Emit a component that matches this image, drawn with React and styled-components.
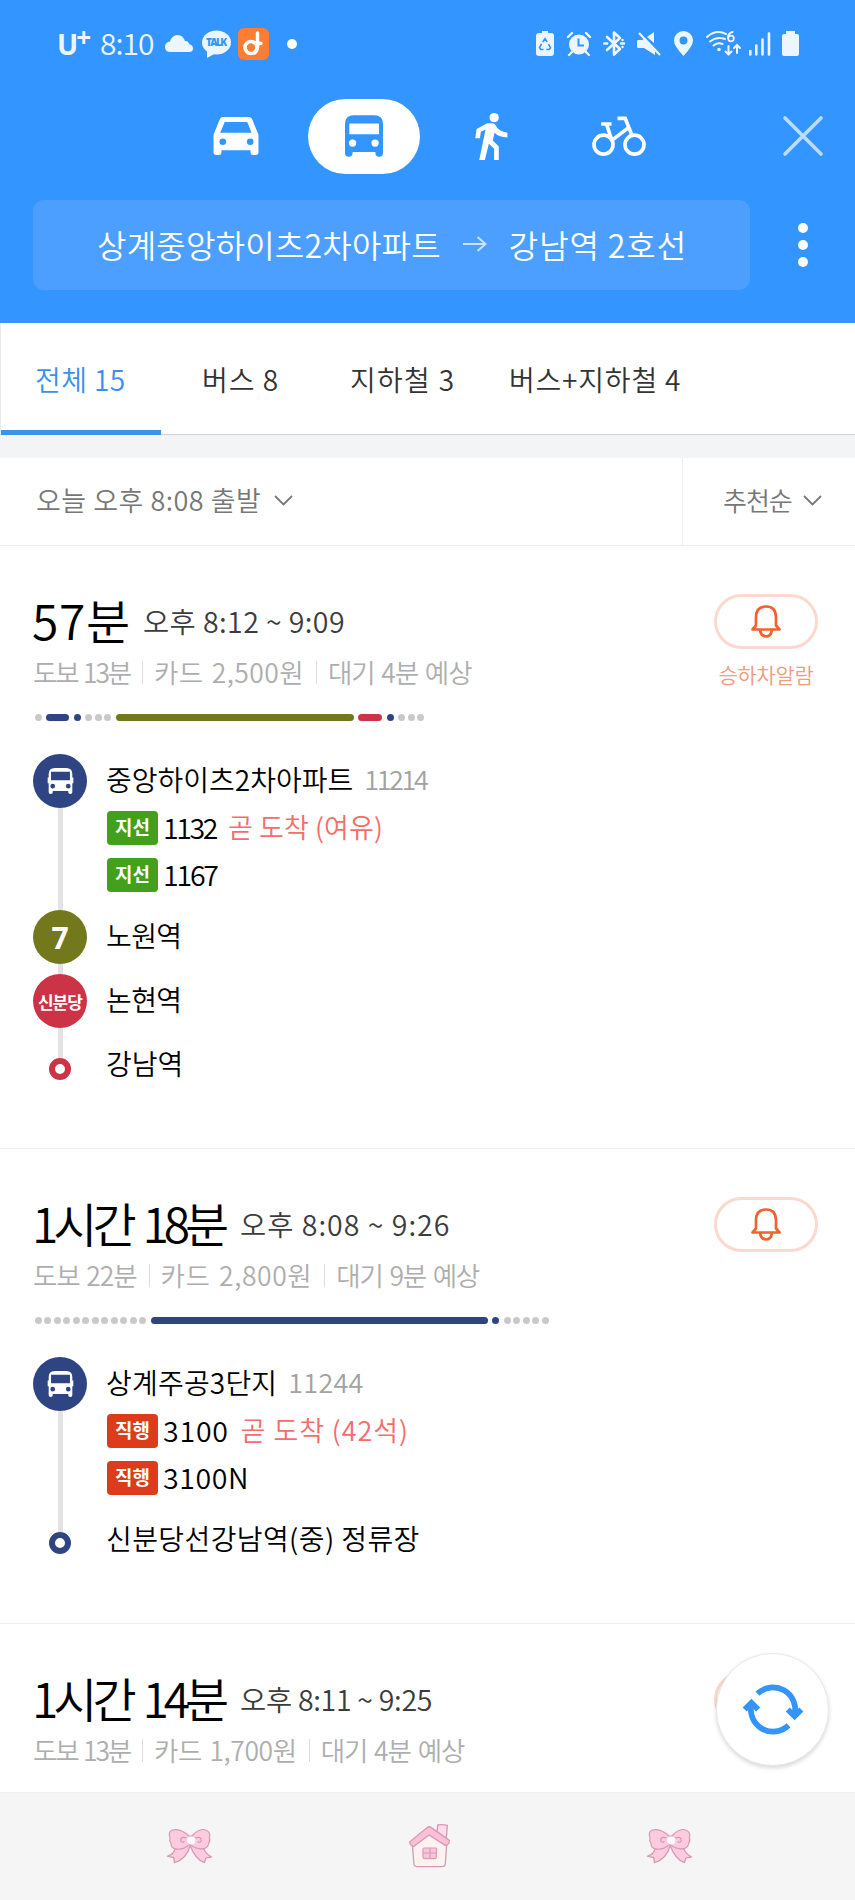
import React from "react";
import styled, { createGlobalStyle } from "styled-components";

const GlobalStyle = createGlobalStyle`
  * {
    box-sizing: border-box;
  }

  body {
    margin: 0;
    background: #fff;
    font-family: "Noto Sans CJK KR", "Noto Sans", sans-serif;
    font-weight: 350;
  }
`;

const Screen = styled.div`
  position: relative;
  width: 855px;
  height: 1900px;
  display: flex;
  flex-direction: column;
  overflow: hidden;
  background: #fff;
`;

const Text = styled.span`
  flex: none;
  margin-left: ${(p) => p.$ml || 0}px;
  font-size: ${(p) => p.$size}px;
  line-height: ${(p) => p.$line || 36}px;
  letter-spacing: ${(p) => p.$ls || 0}px;
  color: ${(p) => p.$color || "#000"};
  white-space: nowrap;
`;

const Header = styled.header`
  flex: none;
  height: 323px;
  background: #3395ff;
  color: #fff;
`;

const StatusBar = styled.div`
  height: 87px;
  padding: 0 56px 0 57px;
  display: flex;
  align-items: center;
  justify-content: space-between;
`;

const StatusLeft = styled.div`
  display: flex;
  align-items: center;
`;

const Carrier = styled.span`
  display: flex;
  width: 43px;
  font: 700 28px/28px "Open Sans", sans-serif;
  color: #edf6ff;

  sup {
    font-size: 26px;
    line-height: 14px;
    margin-left: -2px;
  }
`;

const Clock = styled(Text)`
  padding-bottom: 3px;
`;

const StatusIcons = styled.div`
  display: flex;
  align-items: center;
`;

const Glyph = styled.svg`
  flex: none;
  display: block;
  overflow: visible;
  margin-left: ${(p) => p.$ml || 0}px;
`;

const Dot = styled.i`
  width: 10px;
  height: 10px;
  border-radius: 50%;
  background: #fff;
  margin-left: ${(p) => p.$ml || 0}px;
`;

const ModeBar = styled.nav`
  height: 98px;
  padding: 0 32px 0 213px;
  display: flex;
  align-items: center;
`;

const ActiveMode = styled.div`
  width: 112px;
  height: 75px;
  margin: 0 55px 0 49px;
  border-radius: 38px;
  background: #fff;
  display: flex;
  align-items: center;
  justify-content: center;
`;

const SearchRow = styled.div`
  display: flex;
  align-items: center;
  padding: 15px 47px 0 33px;
  justify-content: space-between;
`;

const SearchBox = styled.div`
  width: 717px;
  height: 90px;
  padding: 0 0 2px 64px;
  border-radius: 11px;
  background: #4d9fff;
  display: flex;
  align-items: center;
`;

const Kebab = styled.div`
  display: flex;
  flex-direction: column;
  gap: 7px;
`;

const Tabs = styled.div`
  flex: none;
  height: 112px;
  display: flex;
  border-left: 1px solid #e8ecef;
  border-bottom: 1px solid #cdd3d8;
`;

const Tab = styled.div`
  height: 112px;
  padding: 38px 0 0 ${(p) => p.$pad}px;
  width: ${(p) => p.$width}px;
  border-bottom: 5px solid ${(p) => (p.$active ? "#3e92ea" : "transparent")};
`;

const Spacer = styled.div`
  flex: none;
  height: 23px;
  background: #f3f4f6;
`;

const Filters = styled.div`
  flex: none;
  height: 88px;
  display: flex;
  border-bottom: 1px solid #ebebeb;
`;

const Filter = styled.div`
  display: flex;
  align-items: center;
  padding: 0 0 3px ${(p) => p.$pad}px;
  flex: ${(p) => (p.$grow ? 1 : "none")};
  width: ${(p) => p.$width || "auto"};
  border-left: ${(p) => (p.$grow ? "none" : "1px solid #eee")};
`;

const Card = styled.section`
  flex: none;
  height: ${(p) => p.$height}px;
  padding: 44px 37px 0 33px;
  display: flex;
  justify-content: space-between;
  align-items: flex-start;
  border-bottom: 1px solid #f0f0f0;
`;

const Headline = styled.div`
  display: flex;
  align-items: center;
  height: 62px;
  margin-left: -1px;
`;

const Duration = styled(Text)`
  width: ${(p) => p.$width}px;
  padding-bottom: 4px;
  word-spacing: 5px;
`;

const Meta = styled.div`
  display: flex;
  align-items: center;
  height: 40px;
  word-spacing: 2px;

  span + span {
    margin-left: 12px;
    padding-left: 12px;
    background: linear-gradient(#dcdcdc, #dcdcdc) left center / 1px 23px no-repeat;
  }
`;

const Progress = styled.div`
  display: flex;
  gap: 4.5px;
  padding-left: 1.5px;
  margin-top: 22px;
`;

const Walk = styled.div`
  display: flex;
  gap: 2.5px;
`;

const Piece = styled.i`
  width: ${(p) => p.$width || 7}px;
  height: 7px;
  border-radius: 4px;
  background: ${(p) => p.$color || "#c9c9c9"};
`;

const Steps = styled.div`
  margin-top: 33px;
`;

const Step = styled.div`
  display: flex;
  height: ${(p) => p.$height}px;
`;

const Rail = styled.div`
  width: 54px;
  margin-right: 19px;
  display: flex;
  flex-direction: column;
  align-items: center;

  &::after {
    content: "";
    flex: 1;
    width: 5px;
    background: ${(p) => (p.$last ? "transparent" : "#e3e3e3")};
  }
`;

const Marker = styled.div`
  flex: none;
  width: 54px;
  height: 54px;
  border-radius: 50%;
  background: ${(p) => p.$color};
  color: #fff;
  display: flex;
  align-items: center;
  justify-content: center;
  font: ${(p) => (p.$small ? '700 17px "Noto Sans CJK KR"' : '700 30px "Open Sans"')}, sans-serif;
  letter-spacing: ${(p) => (p.$small ? -0.9 : 0)}px;
`;

const Ring = styled.div`
  flex: none;
  width: 22px;
  height: 22px;
  border-radius: 50%;
  border: 6.5px solid ${(p) => p.$color};
`;

const StepBody = styled.div`
  margin-top: ${(p) => p.$top}px;
`;

const StopName = styled.div`
  display: flex;
  align-items: center;
  gap: 11px;
  height: 36px;
`;

const BusLine = styled.div`
  display: flex;
  align-items: center;
  height: 34px;
  margin-top: 14px;

  & + & {
    margin-top: 13px;
  }
`;

const Badge = styled.span`
  width: 51px;
  height: 34px;
  margin: 0 5px 0 1px;
  border-radius: 4px;
  background: ${(p) => p.$color};
  color: #fff;
  font-size: 19px;
  line-height: 32px;
  font-weight: 700;
  text-align: center;
`;

const BusText = styled(Text)`
  padding-bottom: 2px;
`;

const Alarm = styled.div`
  width: 104px;
  margin-top: 4px;
  display: flex;
  flex-direction: column;
  align-items: center;
  gap: 9px;
`;

const AlarmButton = styled.button`
  width: 104px;
  height: 55px;
  padding: 0;
  border: 3px solid #fbd9ce;
  border-radius: 28px;
  background: #fff;
  display: flex;
  align-items: center;
  justify-content: center;
`;

// floats over the bottom of the list
const Refresh = styled.button`
  position: absolute;
  right: 26px;
  bottom: 134px;
  width: 113px;
  height: 113px;
  padding: 0;
  border: 1px solid #e9e9e9;
  border-radius: 50%;
  background: #fff;
  box-shadow: 0 2px 4px rgba(0, 0, 0, 0.16);
  display: flex;
  align-items: center;
  justify-content: center;
`;

const BottomBar = styled.footer`
  flex: none;
  height: 107px;
  margin-top: auto;
  padding: 31px 163px 0 167px;
  background: #f5f5f5;
  display: flex;
  justify-content: space-between;
`;

const NAVY = "#2f4482";
const OLIVE = "#72781b";
const RED = "#cd3347";

const Icon = ({ w, h, box, ml, children }) => (
  <Glyph width={w} height={h} viewBox={box || `0 0 ${w} ${h}`} $ml={ml} fill="none">
    {children}
  </Glyph>
);

const StatusRight = () => (
  <StatusIcons>
    <Icon w={18} h={25}>
      <path d="M6 0h6v2h3q3 0 3 3v17q0 3-3 3H3q-3 0-3-3V5q0-3 3-3h3z" fill="#edf6ff" />
      <path
        d="M6.8 11 9 7.6l2.2 3.4M12.5 13l2 3.8-1.4 1.7h-2.8M7.5 18.5H4.7l-1.2-1.8 2-3.7"
        stroke="#3395ff"
        strokeWidth="1.6"
      />
    </Icon>
    <Icon w={24} h={24} ml={13}>
      <circle cx="12" cy="12.5" r="10" fill="#edf6ff" />
      <path d="M1 5l4-4M23 5l-4-4M5 20l-3 3M19 20l3 3" stroke="#edf6ff" strokeWidth="2.4" strokeLinecap="round" />
      <path d="M11.5 6.5v7H17" stroke="#3395ff" strokeWidth="2" />
    </Icon>
    <Icon w={22} h={25} ml={12}>
      <path d="M4 6l13 12-6 5.5V1.5L17 7 4 19" stroke="#edf6ff" strokeWidth="2.6" strokeLinejoin="round" strokeLinecap="round" />
      <path d="M1.2 12.5h3M18 12.5h3M19.5 9v.1M19.5 16v.1" stroke="#edf6ff" strokeWidth="2.4" strokeLinecap="round" />
    </Icon>
    <Icon w={24} h={24} ml={12}>
      <path d="M0 9q0-1 1-1h4l2-1 11 12v4L7 16H1q-1 0-1-1zM10 5l7-5v11z" fill="#edf6ff" />
      <path d="M2 1l21 22" stroke="#edf6ff" strokeWidth="2.2" />
    </Icon>
    <Icon w={19} h={25} ml={13}>
      <path d="M9.5 0a9.5 9.5 0 0 1 9.500 9.500Q19 15 9.500 25 0 15 0 9.500A9.500 9.500 0 0 1 9.500 0zm0 5.500a4 4 0 1 0 0 8 4 4 0 0 0 0-8z" fill="#edf6ff" />
    </Icon>
    <Icon w={35} h={25} ml={13}>
      <path
        d="M1 6Q10-2 20 3M4 10.5Q11 5 19 8M7.5 14.5Q12 11 16.5 13M22.5 15v8.5m-3-3l3 3 3-3M31 22v-8m-3 3l3-3 3 3M26.5 1Q22 2 22 7"
        stroke="#edf6ff"
        strokeWidth="2"
        strokeLinecap="round"
      />
      <circle cx="25" cy="7.5" r="2.8" stroke="#edf6ff" strokeWidth="1.8" />
      <circle cx="13" cy="18.5" r="1.8" fill="#edf6ff" />
    </Icon>
    <Icon w={22} h={24} ml={8}>
      <path d="M1.3 19v3.5M7.3 13.5v9M13.5 7.5v15M20 1.5v21" stroke="#edf6ff" strokeWidth="2.6" strokeLinecap="round" />
    </Icon>
    <Icon w={17} h={25} ml={11}>
      <path d="M4 0h9v3h2q2 0 2 2v18q0 2-2 2H2q-2 0-2-2V5q0-2 2-2h2z" fill="#edf6ff" />
    </Icon>
  </StatusIcons>
);

const StatusApps = () => (
  <>
    <Icon w={28} h={17} ml={12}>
      <path d="M5.5 17Q0 17 0 12q0-5 5-5.5Q7 0 12.5 0 18 0 20 6q3-.5 4.3 3.2Q28 10 28 13.5 28 17 24 17z" fill="#edf6ff" />
    </Icon>
    <Icon w={29} h={28} ml={9}>
      <ellipse cx="14.5" cy="12.5" rx="14.5" ry="12" fill="#edf6ff" />
      <path d="M5 20v8l9-5z" fill="#edf6ff" />
      <text x="14.5" y="16" textAnchor="middle" textLength="21" fontFamily="Open Sans" fontSize="10" fontWeight="800" fill="#3395ff">
        TALK
      </text>
    </Icon>
    <Icon w={31} h={32} ml={7}>
      <rect width="31" height="32" rx="6" fill="#ff7d33" />
      <circle cx="13" cy="19.5" r="6" stroke="#fff" strokeWidth="3.6" />
      <path d="M19.5 5v14q0 4-3 6M16 14.500l7 1" stroke="#fff" strokeWidth="3.4" strokeLinecap="round" />
    </Icon>
  </>
);

const CarIcon = () => (
  <Icon w={46} h={38} box="0 0 136 115">
    <path
      fill="#fff"
      fillRule="evenodd"
      d="M30 0H106Q115 0 118 9L136 54V107Q136 115 128 115H120Q113 115 112 108V101H24V108Q23 115 16 115H8Q0 115 0 107V54L18 9Q21 0 30 0ZM34 15 20 48H115L102 15ZM28 65a10 10 0 1 0 0 20 10 10 0 0 0 0-20ZM111 65a10 10 0 1 0 0 20 10 10 0 0 0 0-20Z"
    />
  </Icon>
);

const BusIcon = () => (
  <Icon w={38} h={42} box="0 0 115 125">
    <path
      fill="#3395ff"
      fillRule="evenodd"
      d="M0 26Q0 0 26 0H89Q115 0 115 26V114Q115 125 103 125 92 125 92 114V111H23V114Q23 125 11 125 0 125 0 114ZM13 25V57H103V25ZM23 73a11 11 0 1 0 0 22 11 11 0 0 0 0-22ZM91 73a11 11 0 1 0 0 22 11 11 0 0 0 0-22Z"
    />
  </Icon>
);

const SmallBus = () => (
  <Icon w={25} h={26} box="0 0 74 77">
    <path
      fill="#fff"
      fillRule="evenodd"
      d="M2 18Q2 0 20 0H54Q72 0 72 18V28H75V45H72V72Q72 77 66 77 60 77 60 72V68H14V72Q14 77 8 77 2 77 2 72V45H-1V28H2ZM9 11V36H65V11ZM14 47a7 7 0 1 0 0 14 7 7 0 0 0 0-14ZM60 47a7 7 0 1 0 0 14 7 7 0 0 0 0-14Z"
    />
  </Icon>
);

const WalkIcon = () => (
  <Icon w={33} h={47} box="0 0 98 142">
    <circle cx="57" cy="14" r="14" fill="#fff" />
    <path
      fill="#fff"
      d="M4 48 36 31H50Q58 31 62 38 70 56 97 60V74Q72 74 58 60L53 83 71 101V142H57V108L41 93 29 142H12L31 50 17 57 14 76H0Z"
    />
  </Icon>
);

const BikeIcon = () => (
  <Icon w={54} h={40} box="0 0 161 120" ml={84}>
    <g stroke="#fff" strokeWidth="11">
      <circle cx="34" cy="86" r="28.5" />
      <circle cx="127" cy="86" r="28.5" />
      <path d="M27 24H58M43 24 54 58 62 78M58 74 110 34M76 7H99L121 62" />
    </g>
  </Icon>
);

const Chevron = ({ ml }) => (
  <Icon w={19} h={11} ml={ml}>
    <path d="M1.5 1.5 9.5 9.5 17.5 1.5" stroke="#777" strokeWidth="1.8" strokeLinecap="round" />
  </Icon>
);

const Bell = () => (
  <Icon w={30} h={33}>
    <path d="M5 20.5V12.5Q5 1.5 15 1.5T25 12.5V20.5L28.5 24.5H1.5ZM9 25Q10 31.5 15 31.5T21 25" stroke="#f2622e" strokeWidth="2.7" strokeLinejoin="round" />
  </Icon>
);

const RefreshIcon = () => (
  <Icon w={60} h={53} box="0 0 178 156">
    <g stroke="#3395f9" strokeWidth="17">
      <path d="M43 31A66 66 0 0 1 153 94M133 78 153 98 173 78" />
      <path d="M135 125A66 66 0 0 1 25 62M45 78 25 58 5 78" />
    </g>
  </Icon>
);

const Bow = () => (
  <Icon w={45} h={43} box="0 -14 134 128">
    <g fill="#fccbdd" stroke="#d796b2" strokeWidth="3.5" strokeLinejoin="round">
      <path d="M66 46Q40 58 24 60 20 76 1 82L20 86 22 101Q58 92 69 50 84 92 112 101L115 88 133 84Q114 74 110 60 90 58 72 46" />
      <path d="M66 22Q40-3 16 4 2 10 9 27 6 36 12 44 12 60 30 61 52 62 68 46 86 62 106 60 122 58 124 44 130 34 126 27 132 8 112 3 94-1 74 22Z" />
      <path d="M58 27Q40 22 41 35 44 44 52 38M84 27Q102 22 102 35 99 44 91 38" fill="none" />
    </g>
    <circle cx="72" cy="35" r="12" fill="#fff" />
  </Icon>
);

const House = () => (
  <Icon w={41} h={44} box="0 0 123 132">
    <g stroke="#d99ab5" strokeWidth="4" strokeLinejoin="round">
      <path d="M84 28 86 3Q100 0 115 4L112 42Z" fill="#fbdde8" />
      <path d="M10 62 15 122Q17 128 30 128H98Q108 128 109 120L113 60 60 20Z" fill="#fcf3f0" />
      <path d="M2 54 53 12Q60 5 67 11L121 49Q122 60 110 65L60 33 15 67Q3 66 2 54Z" fill="#fcc0d6" />
      <path d="M46 72H80Q84 72 83 77L82 99Q82 104 77 104H48Q42 104 42 99V76Q42 72 46 72ZM63 72V104M42 87H83" fill="#f8c4d9" strokeWidth="3.5" />
    </g>
  </Icon>
);

const routes = [
  {
    height: 603,
    duration: ["57분", 0.6, 111],
    time: ["오후 8:12 ~ 9:09", 0.4],
    meta: [["도보 13분", -2.2], ["카드 2,500원", 0.4], ["대기 4분 예상", -1.1]],
    alarmLabel: "승하차알람",
    pieces: [1, [23, NAVY], [7, NAVY], 3, [238, OLIVE], [24, RED], [7, NAVY], 3],
    steps: [
      {
        height: 156,
        marker: "bus",
        color: NAVY,
        name: ["중앙하이츠2차아파트", 0],
        stop: ["11214", -2.4],
        top: 7,
        buses: [
          { kind: "지선", color: "#43a01c", no: ["1132", -2.4], note: ["곧 도착 (여유)", 0.1] },
          { kind: "지선", color: "#43a01c", no: ["1167", -2.2] },
        ],
      },
      { height: 64, marker: "7", color: OLIVE, name: ["노원역", -0.6], top: 7 },
      { height: 84, marker: "신분당", color: RED, name: ["논현역", -0.6], top: 7 },
      { height: 40, marker: "ring", color: RED, name: ["강남역", 0], top: -13 },
    ],
  },
  {
    height: 475,
    duration: ["1시간 18분", -5, 208],
    time: ["오후 8:08 ~ 9:26", 1],
    meta: [["도보 22분", -1.1], ["카드 2,800원", 0.6], ["대기 9분 예상", -1.2]],
    pieces: [12, [337, NAVY], [7, NAVY], 5],
    steps: [
      {
        height: 175,
        marker: "bus",
        color: NAVY,
        name: ["상계주공3단지", 0.2],
        stop: ["11244", 0.2],
        top: 7,
        buses: [
          { kind: "직행", color: "#dc3c1a", no: ["3100", 0.8], note: ["곧 도착 (42석)", 0.9] },
          { kind: "직행", color: "#dc3c1a", no: ["3100N", 0.6] },
        ],
      },
      { height: 40, marker: "ring", color: NAVY, name: ["신분당선강남역(중) 정류장", 0.4], top: -12 },
    ],
  },
  {
    height: 169,
    duration: ["1시간 14분", -5, 208],
    time: ["오후 8:11 ~ 9:25", -0.3],
    meta: [["도보 13분", -2.2], ["카드 1,700원", -0.4], ["대기 4분 예상", -1.1]],
    pieces: [],
    steps: [],
  },
];

const StepRow = ({ step, last }) => (
  <Step $height={step.height}>
    <Rail $last={last}>
      {step.marker === "ring" ? (
        <Ring $color={step.color} />
      ) : (
        <Marker $color={step.color} $small={step.marker.length > 1}>
          {step.marker === "bus" ? <SmallBus /> : step.marker}
        </Marker>
      )}
    </Rail>
    <StepBody $top={step.top}>
      <StopName>
        <Text $size={28} $ls={step.name[1]}>{step.name[0]}</Text>
        {step.stop && <Text $size={27} $ls={step.stop[1]} $color="#a2a2a2">{step.stop[0]}</Text>}
      </StopName>
      {(step.buses || []).map((bus) => (
        <BusLine key={bus.no[0]}>
          <Badge $color={bus.color}>{bus.kind}</Badge>
          <BusText $size={28.5} $ls={bus.no[1]}>{bus.no[0]}</BusText>
          {bus.note && (
            <BusText $size={27} $ls={bus.note[1]} $ml={12} $color="#f56c6c">{bus.note[0]}</BusText>
          )}
        </BusLine>
      ))}
    </StepBody>
  </Step>
);

const RouteCard = ({ route }) => (
  <Card $height={route.height}>
    <div>
      <Headline>
        <Duration $size={48} $line={58} $ls={route.duration[1]} $width={route.duration[2]}>
          {route.duration[0]}
        </Duration>
        <Text $size={28.5} $ls={route.time[1]} $color="#3c3c3c">{route.time[0]}</Text>
      </Headline>
      <Meta>
        {route.meta.map(([label, ls]) => (
          <Text key={label} $size={26.5} $ls={ls} $color="#aeaeae">{label}</Text>
        ))}
      </Meta>
      <Progress>
        {route.pieces.map((piece, i) =>
          Array.isArray(piece) ? (
            <Piece key={i} $width={piece[0]} $color={piece[1]} />
          ) : (
            <Walk key={i}>
              {Array.from({ length: piece }, (_, n) => (
                <Piece key={n} />
              ))}
            </Walk>
          )
        )}
      </Progress>
      <Steps>
        {route.steps.map((step, i) => (
          <StepRow key={step.name[0]} step={step} last={i === route.steps.length - 1} />
        ))}
      </Steps>
    </div>
    <Alarm>
      <AlarmButton>
        <Bell />
      </AlarmButton>
      {route.alarmLabel && (
        <Text $size={21} $line={32} $ls={-0.3} $color="#ee9c7d">{route.alarmLabel}</Text>
      )}
    </Alarm>
  </Card>
);

const App = () => (
  <>
    <GlobalStyle />
    <Screen>
      <Header>
        <StatusBar>
          <StatusLeft>
            <Carrier>U<sup>+</sup></Carrier>
            <Clock $size={30} $ls={-1} $color="#edf6ff">8:10</Clock>
            <StatusApps />
            <Dot $ml={18} />
          </StatusLeft>
          <StatusRight />
        </StatusBar>
        <ModeBar>
          <CarIcon />
          <ActiveMode>
            <BusIcon />
          </ActiveMode>
          <WalkIcon />
          <BikeIcon />
          <Icon w={40} h={40} ml={137}>
            <path d="M2 2 38 38M38 2 2 38" stroke="#bcdcff" strokeWidth="3.6" strokeLinecap="round" />
          </Icon>
        </ModeBar>
        <SearchRow>
          <SearchBox>
            <Text $size={32} $line={44} $ls={0.2} $color="#fff">상계중앙하이츠2차아파트</Text>
            <Icon w={24} h={16} ml={22}>
              <path d="M0 8H22M14.5 1 22.5 8 14.5 15" stroke="#c9e2ff" strokeWidth="2" />
            </Icon>
            <Text $size={32} $line={44} $ls={0.9} $ml={22} $color="#fff">강남역 2호선</Text>
          </SearchBox>
          <Kebab>
            <Dot />
            <Dot />
            <Dot />
          </Kebab>
        </SearchRow>
      </Header>
      <Tabs>
        <Tab $active $pad={34} $width={160}>
          <Text $size={28} $ls={0.4} $color="#3a90ee">전체 15</Text>
        </Tab>
        <Tab $pad={41} $width={162}>
          <Text $size={28} $ls={1} $color="#333">버스 8</Text>
        </Tab>
        <Tab $pad={27} $width={159}>
          <Text $size={28} $ls={1.3} $color="#333">지하철 3</Text>
        </Tab>
        <Tab $pad={27} $width={240}>
          <Text $size={28} $ls={0.8} $color="#333">버스+지하철 4</Text>
        </Tab>
      </Tabs>
      <Spacer />
      <Filters>
        <Filter $grow $pad={36}>
          <Text $size={27} $ls={0.5} $color="#777">오늘 오후 8:08 출발</Text>
          <Chevron ml={13} />
        </Filter>
        <Filter $pad={40} $width="173px">
          <Text $size={26} $ls={-1} $color="#777">추천순</Text>
          <Chevron ml={11} />
        </Filter>
      </Filters>
      {routes.map((route) => (
        <RouteCard key={route.duration[0]} route={route} />
      ))}
      <BottomBar>
        <Bow />
        <House />
        <Bow />
      </BottomBar>
      <Refresh>
        <RefreshIcon />
      </Refresh>
    </Screen>
  </>
);

export default App;
